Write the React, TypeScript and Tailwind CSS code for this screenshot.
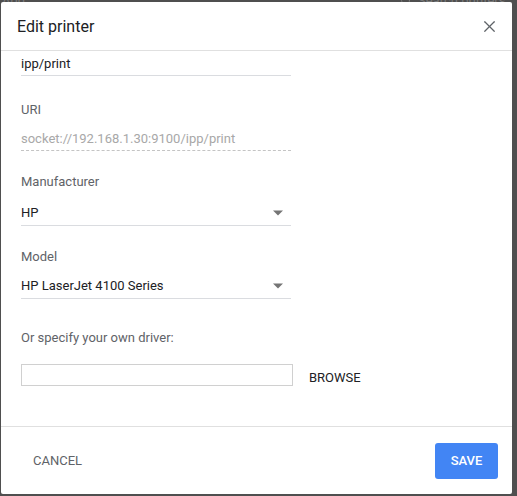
import { Search, X } from "lucide-react";

const field = "w-[270px] text-[13px] leading-[16px] text-[#202124]";
const label = "text-[13px] leading-[16px] text-[#5f6368]";

function Caret() {
  return (
    <svg width="12" height="6" viewBox="0 0 12 6" className="shrink-0">
      <path d="M1 0.5h10L6 5.5z" fill="#757575" />
    </svg>
  );
}

function Select({ value }: { value: string }) {
  return (
    <div className={`${field} flex h-[25px] items-center justify-between border-b border-[#dadce0] pr-[7px]`}>
      <span>{value}</span>
      <Caret />
    </div>
  );
}

export default function App() {
  return (
    <div
      className="relative h-[496px] w-[517px] overflow-hidden bg-[#4f4f4f] pt-[2px] pl-[1px]"
      style={{ fontFamily: "Roboto, 'Liberation Sans', sans-serif" }}
    >
      {/* page behind the scrim */}
      <div className="absolute top-[-9px] left-[400px] flex items-center gap-[6px] text-[13px] text-[#7a7a7a]">
        <Search size={12} />
        <span>Search printers</span>
      </div>
      <div className="absolute top-[-9px] left-[2px] text-[13px] text-[#7a7a7a]">Add</div>

      <div className="relative flex h-[492px] w-[511px] flex-col rounded-[2px] bg-white">
        <div className="flex h-[49px] items-center justify-between border-b border-[#e0e0e0] pr-[13px] pl-[16px]">
          <h1 className="pt-[2px] text-[16px] text-[#202124]">Edit printer</h1>
          <X size={19} strokeWidth={1.5} className="text-[#5f6368]" />
        </div>

        <div className="flex flex-1 flex-col pl-[20px]">
          <div className={`${field} flex h-[25px] items-center border-b border-[#dadce0] pt-[1px]`}>ipp/print</div>

          <div className={`mt-[26px] ${label}`}>URI</div>
          <div className="mt-[9px] flex h-[24px] w-[270px] items-center border-b border-dashed border-[#c4c4c4] text-[13px] leading-[16px] text-[#a8a8a8]">
            socket://192.168.1.30:9100/ipp/print
          </div>

          <div className={`mt-[23px] ${label}`}>Manufacturer</div>
          <div className="mt-[11px]">
            <Select value="HP" />
          </div>

          <div className={`mt-[23px] ${label}`}>Model</div>
          <div className="mt-[9px]">
            <Select value="HP LaserJet 4100 Series" />
          </div>

          <div className={`mt-[31px] ${label}`}>Or specify your own driver:</div>
          <div className="mt-[18px] flex items-center">
            <div className="h-[22px] w-[272px] border border-[#d0d0d0]" />
            <button type="button" className="ml-[16px] pt-[5px] text-[13px] leading-[16px] text-[#202124]">
              BROWSE
            </button>
          </div>
        </div>

        <div className="flex h-[68px] items-center justify-between border-t border-[#e0e0e0] pr-[14px] pl-[32px]">
          <button type="button" className="text-[13px] text-[#5f6368]">
            CANCEL
          </button>
          <button
            type="button"
            className="h-[36px] w-[63px] rounded-[3px] bg-[#4285f4] text-[13px] font-medium text-white"
          >
            SAVE
          </button>
        </div>
      </div>
    </div>
  );
}
